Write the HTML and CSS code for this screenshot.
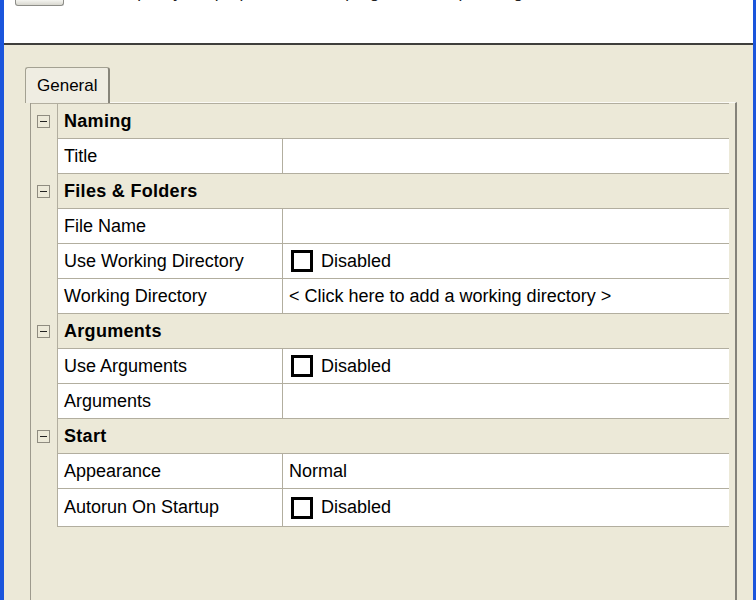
FILE: index.html
```html
<!DOCTYPE html>
<html lang="en">
  <head>
    <meta charset="UTF-8" />
    <meta name="viewport" content="width=device-width, initial-scale=1.0" />
    <title>Program Properties</title>

    <link rel="stylesheet" href="styles.css">
  </head>
  <body>
    <div class="window">
      <div class="header">
        <div class="header-btn"></div>
        <div class="header-text">Specify the properties of this program, lookup settings</div>
      </div>

      <div class="content">
        <div class="tabs">
          <div class="tab active">General</div>
        </div>

        <div class="panel">
          <div class="prop-grid">
            <!-- Naming -->
            <div class="row group">
              <div class="gutter"><span class="toggle"></span></div>
              <div class="group-name">Naming</div>
            </div>
            <div class="row">
              <div class="gutter"></div>
              <div class="label">Title</div>
              <div class="value"></div>
            </div>

            <!-- Files & Folders -->
            <div class="row group">
              <div class="gutter"><span class="toggle"></span></div>
              <div class="group-name">Files &amp; Folders</div>
            </div>
            <div class="row">
              <div class="gutter"></div>
              <div class="label">File Name</div>
              <div class="value"></div>
            </div>
            <div class="row">
              <div class="gutter"></div>
              <div class="label">Use Working Directory</div>
              <div class="value"><span class="check"></span>Disabled</div>
            </div>
            <div class="row">
              <div class="gutter"></div>
              <div class="label">Working Directory</div>
              <div class="value">&lt; Click here to add a working directory &gt;</div>
            </div>

            <!-- Arguments -->
            <div class="row group">
              <div class="gutter"><span class="toggle"></span></div>
              <div class="group-name">Arguments</div>
            </div>
            <div class="row">
              <div class="gutter"></div>
              <div class="label">Use Arguments</div>
              <div class="value"><span class="check"></span>Disabled</div>
            </div>
            <div class="row">
              <div class="gutter"></div>
              <div class="label">Arguments</div>
              <div class="value"></div>
            </div>

            <!-- Start -->
            <div class="row group">
              <div class="gutter"><span class="toggle"></span></div>
              <div class="group-name">Start</div>
            </div>
            <div class="row">
              <div class="gutter"></div>
              <div class="label">Appearance</div>
              <div class="value">Normal</div>
            </div>
            <div class="row last">
              <div class="gutter"></div>
              <div class="label">Autorun On Startup</div>
              <div class="value"><span class="check"></span>Disabled</div>
            </div>
          </div>
        </div>
      </div>
    </div>
  </body>
</html>
```

FILE: styles.css
```css
html,
body {
  margin: 0;
  padding: 0;
  height: 100%;
  overflow: hidden;
}
body {
  font-family: "Liberation Sans", Arial, sans-serif;
  font-size: 18px;
  color: #000;
  background: #ece9d8;
}
.window {
  width: 756px;
  height: 600px;
  box-sizing: border-box;
  border-left: 4px solid #1a55dc;
  border-right: 3px solid #1a55dc;
  background: #ece9d8;
  display: flex;
  flex-direction: column;
  overflow: hidden;
}
.header {
  height: 43px;
  flex-shrink: 0;
  background: #fff;
  border-bottom: 2px solid #3f3f3c;
  display: flex;
  align-items: flex-start;
  overflow: hidden;
}
.header-btn {
  width: 49px;
  height: 6px;
  margin-left: 11px;
  box-sizing: border-box;
  border: 1px solid #8d8d88;
  border-top: none;
  border-radius: 0 0 3px 3px;
  background: linear-gradient(#f4f4f0, #d9d8d0);
}
.header-text {
  margin-top: -16px;
  margin-left: 62px;
  font-size: 17px;
  line-height: 18px;
  white-space: nowrap;
  color: #222;
}
.content {
  flex: 1;
  padding: 22px 16px 0 26px;
  display: flex;
  flex-direction: column;
}
.tabs {
  display: flex;
}
.tab {
  margin-left: -5px;
  margin-bottom: -1px;
  height: 36px;
  box-sizing: border-box;
  padding: 0 11px;
  border: 1px solid #a3a192;
  border-right: 2px solid #87857a;
  border-bottom: none;
  border-radius: 3px 3px 0 0;
  background: #efede2;
  font-size: 17px;
  display: flex;
  align-items: center;
  position: relative;
  z-index: 1;
}
.panel {
  flex: 1;
  border-top: 1px solid #fbfaf5;
  border-left: 1px solid #9d9a8d;
  border-right: 2px solid #85837a;
  padding-right: 6px;
}
.prop-grid {
  border-top: 1px solid #b2ae9f;
}
.row {
  display: flex;
  height: 35px;
}
.row.last {
  height: 38px;
}
.gutter {
  width: 27px;
  flex-shrink: 0;
  box-sizing: border-box;
  border-right: 1px solid #b2ae9f;
  background: #ece9d8;
  padding: 11px 0 0 6px;
}
.toggle {
  display: block;
  width: 13px;
  height: 13px;
  box-sizing: border-box;
  border: 1px solid #8f8c80;
  background: #ece9d8;
  position: relative;
}
.toggle::after {
  content: "";
  position: absolute;
  left: 2px;
  top: 5px;
  width: 7px;
  height: 1px;
  background: #222;
}
.group-name,
.label,
.value {
  box-sizing: border-box;
  border-bottom: 1px solid #b2ae9f;
  display: flex;
  align-items: center;
  padding-left: 6px;
  white-space: nowrap;
}
.group-name {
  flex: 1;
  background: #ece9d8;
  font-weight: bold;
  letter-spacing: 0.3px;
}
.label {
  width: 225px;
  flex-shrink: 0;
  border-right: 1px solid #b2ae9f;
  background: #fff;
}
.value {
  flex: 1;
  background: #fff;
}
.check {
  width: 22px;
  height: 22px;
  box-sizing: border-box;
  border: 3px solid #000;
  background: #fff;
  margin-left: 2px;
  margin-right: 8px;
  flex-shrink: 0;
}
```
